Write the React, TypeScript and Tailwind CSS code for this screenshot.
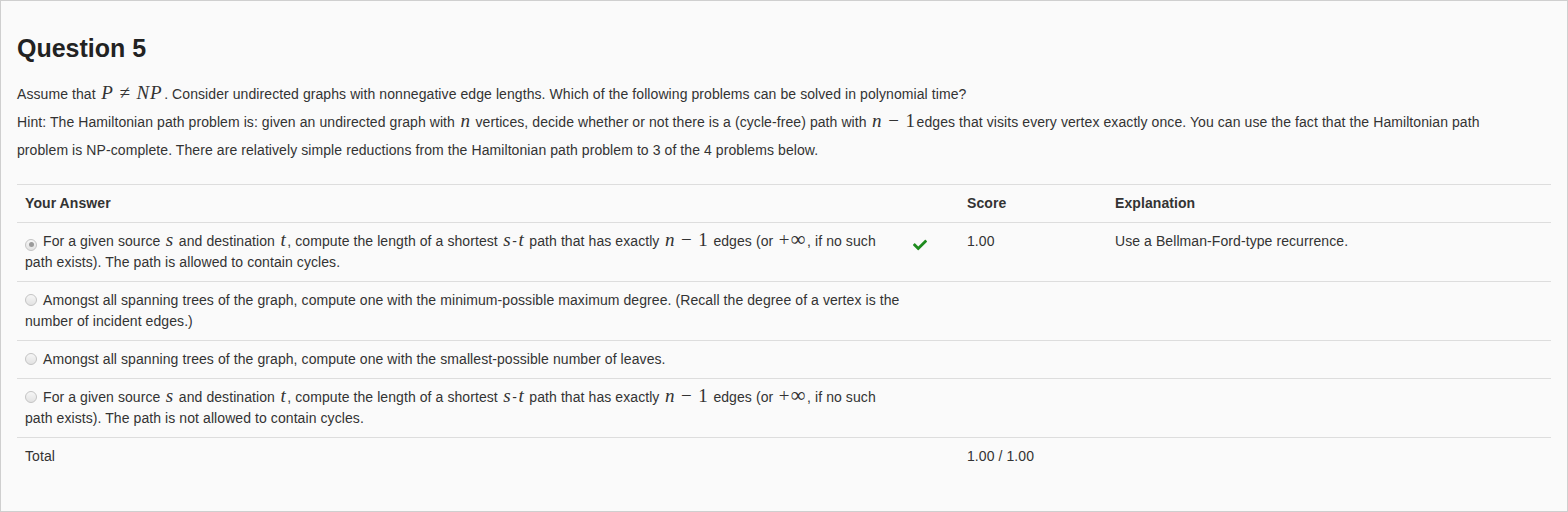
import React from 'react';

const serif = { fontFamily: '"Liberation Serif", "DejaVu Serif", serif' };

const M = ({ children, up }: { children: React.ReactNode; up?: boolean }) => (
  <span className={`text-[19px] leading-[10px] px-[1.5px] ${up ? 'not-italic' : 'italic'}`} style={serif}>
    {children}
  </span>
);

const Op = ({ children }: { children: React.ReactNode }) => (
  <span className="text-[19px] leading-[10px] mx-[5px]" style={serif}>
    {children}
  </span>
);

const NMinus1 = () => (
  <span className="whitespace-nowrap">
    <M>n</M>
    <Op>−</Op>
    <M up>1</M>
  </span>
);

const PlusInf = () => (
  <span className="whitespace-nowrap text-[19px] leading-[10px] px-[1.5px]" style={serif}>
    +<span className="ml-[1px] text-[21px]">∞</span>
  </span>
);

const Radio = ({ checked }: { checked?: boolean }) => (
  <span className="inline-flex w-[12px] h-[12px] rounded-full border border-[#c4c4c4] bg-gradient-to-b from-[#f6f6f6] to-[#e2e2e2] items-center justify-center align-[-1px] mr-[6px]">
    {checked && <span className="w-[5px] h-[5px] rounded-full bg-[#9a9a9a]" />}
  </span>
);

const Check = () => (
  <svg viewBox="0 0 512 512" width="14" height="14" className="inline-block">
    <path
      fill="#1e8c1e"
      d="M173.898 439.404l-166.4-166.4c-9.997-9.997-9.997-26.206 0-36.204l36.203-36.204c9.997-9.998 26.207-9.998 36.204 0L192 312.69 432.095 72.596c9.997-9.997 26.207-9.997 36.204 0l36.203 36.204c9.997 9.997 9.997 26.206 0 36.204l-294.4 294.401c-9.998 9.997-26.207 9.997-36.204-.001z"
    />
  </svg>
);

interface Row {
  id: number;
  checked: boolean;
  text: React.ReactNode;
  correct: boolean;
  score: string;
  explanation: string;
}

const rows: Row[] = [
  {
    id: 1,
    checked: true,
    correct: true,
    score: '1.00',
    explanation: 'Use a Bellman-Ford-type recurrence.',
    text: (
      <>
        For a given source <M>s</M> and destination <M>t</M>, compute the length of a shortest <M>s</M>-<M>t</M> path
        that has exactly <NMinus1 /> edges (or <PlusInf />, if no such path exists). The path is allowed to contain
        cycles.
      </>
    ),
  },
  {
    id: 2,
    checked: false,
    correct: false,
    score: '',
    explanation: '',
    text: (
      <>
        Amongst all spanning trees of the graph, compute one with the minimum-possible maximum degree. (Recall the
        degree of a vertex is the number of incident edges.)
      </>
    ),
  },
  {
    id: 3,
    checked: false,
    correct: false,
    score: '',
    explanation: '',
    text: <>Amongst all spanning trees of the graph, compute one with the smallest-possible number of leaves.</>,
  },
  {
    id: 4,
    checked: false,
    correct: false,
    score: '',
    explanation: '',
    text: (
      <>
        For a given source <M>s</M> and destination <M>t</M>, compute the length of a shortest <M>s</M>-<M>t</M> path
        that has exactly <NMinus1 /> edges (or <PlusInf />, if no such path exists). The path is not allowed to
        contain cycles.
      </>
    ),
  },
];

const App = () => {
  return (
    <div
      className="w-[1568px] h-[512px] bg-[#fafafa] border border-[#cfcfcf] pl-[16px] pr-[16px] pt-[32px] text-[14px] tracking-[0.08px] text-[#333]"
      style={{ fontFamily: '"Liberation Sans", Arial, sans-serif' }}
    >
      <h2 className="text-[25px] leading-[30px] font-bold tracking-normal text-[#222]">Question 5</h2>
      <div className="mt-[17px] leading-[28px] w-[1500px]">
        <p>
          Assume that{' '}
          <span className="whitespace-nowrap">
            <M>P</M>
            <Op>≠</Op>
            <M>
              <span className="tracking-[1px]">NP</span>
            </M>
          </span>
          . Consider undirected graphs with nonnegative edge lengths. Which of the following problems can be solved in
          polynomial time?
        </p>
        <p>
          Hint: The Hamiltonian path problem is: given an undirected graph with <M>n</M> vertices, decide whether or
          not there is a (cycle-free) path with <NMinus1 />edges that visits every vertex exactly once. You can use the
          fact that the Hamiltonian path problem is NP-complete. There are relatively simple reductions from the
          Hamiltonian path problem to 3 of the 4 problems below.
        </p>
      </div>

      <table className="mt-[20px] w-[1534px] table-fixed border-collapse leading-[21px]">
        <colgroup>
          <col className="w-[892px]" />
          <col className="w-[50px]" />
          <col className="w-[148px]" />
          <col className="w-[444px]" />
        </colgroup>
        <thead>
          <tr className="border-t border-b border-[#dddddd]">
            <th className="p-[8px] text-left font-bold">Your Answer</th>
            <th className="p-[8px]"></th>
            <th className="p-[8px] text-left font-bold">Score</th>
            <th className="p-[8px] text-left font-bold">Explanation</th>
          </tr>
        </thead>
        <tbody>
          {rows.map((row) => (
            <tr key={row.id} className="border-b border-[#dddddd]">
              <td className="p-[8px] align-top">
                <Radio checked={row.checked} />
                {row.text}
              </td>
              <td className="p-[8px] pl-[4px] align-top pt-[11px]">{row.correct && <Check />}</td>
              <td className="p-[8px] align-top">{row.score}</td>
              <td className="p-[8px] align-top">{row.explanation}</td>
            </tr>
          ))}
          <tr>
            <td className="p-[8px]">Total</td>
            <td className="p-[8px]"></td>
            <td className="p-[8px]">1.00 / 1.00</td>
            <td className="p-[8px]"></td>
          </tr>
        </tbody>
      </table>
    </div>
  );
};

export default App;
